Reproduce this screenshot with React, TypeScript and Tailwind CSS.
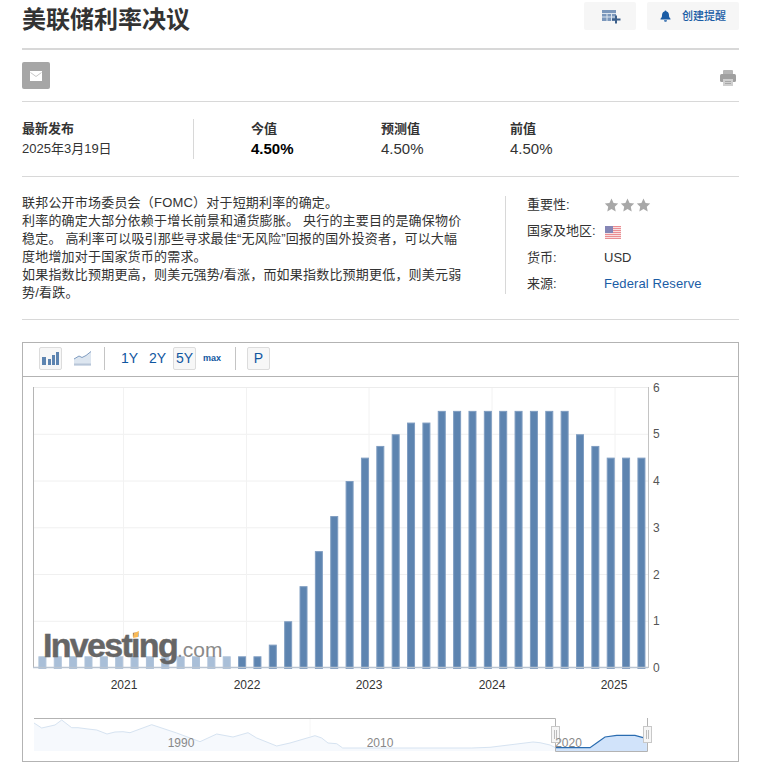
import React from "react";

const values = [
  0.25, 0.25, 0.25, 0.25, 0.25, 0.25, 0.25, 0.25, 0.25, 0.25, 0.25, 0.25, 0.25, 0.25, 0.25,
  0.5, 1, 1.75, 2.5, 3.25, 4, 4.5, 4.75, 5, 5.25, 5.25,
  5.5, 5.5, 5.5, 5.5, 5.5, 5.5, 5.5, 5.5, 5.5,
  5, 4.75, 4.5, 4.5, 4.5,
];

const navA =
  "34,723 41.7,728 55,725 61.7,720 71.7,727.7 78,727.7 88,729 96.7,730 107,734 115,732 123,731.7 130,732.7 151.7,724.7 176.7,733 200,741.7 216.7,734 233,737 248,732.7 256.7,738 276.7,746 290,743 315,735.7 321.7,738 328,743 336.7,743.7 342.7,748 471.7,748 490,747.3 533,742 540,742.7 550,745 555.5,747.7";
const navB = "555.5,747.7 590,747.7 598,742 605,737 616.7,735.3 635,735.3 646.7,738.7";

function Chart() {
  const y = (v: number) => 668 - v * 46.75;
  return (
    <svg viewBox="23 377 715 384" width={715} height={384} className="block">
      {[1, 2, 3, 4, 5].map((v) => (
        <line key={v} x1={33} x2={648} y1={y(v)} y2={y(v)} stroke="#f0f0f0" />
      ))}
      {[123.5, 246.5, 369, 492, 615].map((x) => (
        <line key={x} x1={x} x2={x} y1={387} y2={668} stroke="#f2f2f2" />
      ))}
      <line x1={33} x2={648} y1={387.5} y2={387.5} stroke="#ececec" />
      <line x1={33.5} x2={33.5} y1={387} y2={668} stroke="#b5b5b5" />
      <line x1={648.5} x2={648.5} y1={387} y2={668} stroke="#c4c4c4" />
      {values.map((v, i) => {
        const x = 38.4 + i * 15.36;
        return (
          <rect
            key={i}
            x={x + 0.5}
            y={y(v) + 0.5}
            width={7}
            height={668 - y(v)}
            fill={i < 13 ? "#a9bfd8" : "#5d84b0"}
            stroke={i < 13 ? "#afc3da" : "#7f9dc1"}
            strokeWidth={1}
          />
        );
      })}
      <line x1={33} x2={648} y1={667.5} y2={667.5} stroke="#b9c4d1" strokeWidth={1.4} />
      <text x={43} y={657} fontSize={34} fontWeight={700} letterSpacing={-1.7} fill="#666666" stroke="#666666" strokeWidth={0.5} fontFamily="'Liberation Sans', sans-serif">
        Investing
      </text>
      <polygon points="134,633 139,631 138,637 133,638" fill="#f9b955" />
      <text x={177} y={657} fontSize={21} fill="#8a8a8a" fontFamily="'Liberation Sans', sans-serif">
        .com
      </text>
      {[0, 1, 2, 3, 4, 5, 6].map((v) => (
        <text key={v} x={653} y={y(v) + 4} fontSize={12} fill="#555555">
          {v}
        </text>
      ))}
      {[
        ["2021", 124],
        ["2022", 247],
        ["2023", 369],
        ["2024", 492],
        ["2025", 614],
      ].map(([t, x]) => (
        <text key={t} x={x} y={689} fontSize={12} textAnchor="middle" fill="#333333">
          {t}
        </text>
      ))}
      <polygon points={`${navA} 555.5,751 34,751`} fill="#f6f9fd" />
      <polyline points={navA} fill="none" stroke="#d6e3f1" strokeWidth={1} />
      <polygon points={`${navB} 647,751 555.5,751`} fill="#d1e3fa" />
      <polyline points={navB} fill="none" stroke="#2a6cb0" strokeWidth={1.2} />
      <line x1={310} x2={310} y1={719} y2={736} stroke="#f6f6f6" />
      <polyline points="34,718.5 555.5,718.5 555.5,751.5 647.5,751.5 647.5,718" fill="none" stroke="#b3b3b3" />
      {[551, 643].map((x) => (
        <g key={x}>
          <rect x={x + 0.5} y={726.5} width={8} height={16} fill="#f6f6f6" stroke="#c8c8c8" />
          <line x1={x + 3.5} x2={x + 3.5} y1={730} y2={739} stroke="#bdbdbd" />
          <line x1={x + 5.5} x2={x + 5.5} y1={730} y2={739} stroke="#bdbdbd" />
        </g>
      ))}
      {[
        ["1990", 181],
        ["2010", 380],
        ["2020", 568.5],
      ].map(([t, x]) => (
        <text key={t} x={x} y={747} fontSize={12} textAnchor="middle" fill="#888888">
          {t}
        </text>
      ))}
    </svg>
  );
}

function Star() {
  return (
    <svg width={15} height={14} viewBox="0 0 24 23">
      <polygon points="12,1 15.4,8.2 23,9.1 17.4,14.4 18.9,22 12,18.2 5.1,22 6.6,14.4 1,9.1 8.6,8.2" fill="#a8a8a8" />
    </svg>
  );
}

function Flag() {
  return (
    <svg width={16} height={13} viewBox="0 0 16 13">
      <rect width={16} height={13} fill="#f9dfe0" />
      {[0, 2, 4, 6, 8, 10, 12].map((v) => (
        <rect key={v} y={v} width={16} height={1} fill="#ea8d92" />
      ))}
      <rect width={8} height={7} fill="#8586b5" />
    </svg>
  );
}

export default function App() {
  return (
    <div className="w-[758px] h-[764px] overflow-hidden bg-white pl-[22px] pr-[19px] text-[13px] text-[#333333] [font-family:'Liberation_Sans','Noto_Sans_CJK_SC',sans-serif]">
      {/* header */}
      <div className="flex h-[50px] items-start justify-between border-b-2 border-[#d8d8d8]">
        <h1 className="mt-[5px] text-[24px] leading-[30px] font-bold text-[#333333]">美联储利率决议</h1>
        <div className="mt-[2px] flex gap-[11px]">
          <button className="flex h-[28px] w-[52px] items-center justify-center rounded-[2px] bg-[#f6f6f6] pl-[3px]">
            <svg width={20} height={15} viewBox="0 0 20 15">
              <rect x={0} y={1} width={14} height={11} fill="#7b97bb" />
              <path d="M0 4.500h14M5 4.500v7.500M9.500 4.500v7.500M0 8h14" stroke="#dce5ef" strokeWidth={1} />
              <path d="M14 6.500v8M10 10.500h8.500" stroke="#3c5f8a" strokeWidth={2} />
            </svg>
          </button>
          <button className="flex h-[28px] w-[92px] items-center rounded-[2px] bg-[#f6f6f6] pl-[13px]">
            <svg width={11} height={12} viewBox="0 0 11 12">
              <path d="M5.500 0.500a1 1 0 0 1 1 1c2 .5 2.500 2.200 2.500 4 0 1.500.5 2.300 1.500 3.300v.7H.500v-.7c1-1 1.500-1.800 1.500-3.300 0-1.800.5-3.500 2.500-4a1 1 0 0 1 1-1zM4 10.300h3a1.500 1.500 0 0 1-3 0z" fill="#1a5ca5" />
            </svg>
            <span className="ml-[11px] text-[11px] font-medium text-[#1a5ca5]">创建提醒</span>
          </button>
        </div>
      </div>

      {/* share */}
      <div className="flex h-[52px] items-start justify-between border-b border-[#d8d8d8] pt-[12px]">
        <div className="flex h-[27px] w-[28px] items-center justify-center rounded-[2px] bg-[#a6a6a6]">
          <svg width={12} height={10} viewBox="0 0 12 10">
            <rect width={12} height={10} fill="#ffffff" />
            <path d="M0.500 1.500L6 5.500l5.500-4" fill="none" stroke="#c8c8c8" strokeWidth={1} />
          </svg>
        </div>
        <svg width={16} height={16} viewBox="0 0 16 16" className="mt-[8px] mr-[3px]">
          <rect x={3} y={0} width={10} height={5} rx={1} fill="#b5b5b5" />
          <rect x={0} y={4} width={16} height={8} rx={1.500} fill="#a0a0a0" />
          <rect x={3} y={9} width={10} height={7} fill="#cfcfcf" />
          <path d="M5 11.500h6M5 13.500h6" stroke="#a8a8a8" />
        </svg>
      </div>

      {/* stats */}
      <div className="flex h-[75px] items-start border-b border-[#d8d8d8] pt-[17px]">
        <div className="h-[40px] w-[172px] border-r border-[#d8d8d8]">
          <div className="mt-px h-[18px] font-bold leading-[18px]">最新发布</div>
          <div className="mt-[2px] leading-[18px]">2025年3月19日</div>
        </div>
        <div className="ml-[57px] w-[130px]">
          <div className="mt-px h-[18px] font-bold leading-[18px]">今值</div>
          <div className="mt-[2px] text-[15px] font-bold leading-[18px] text-black">4.50%</div>
        </div>
        <div className="w-[129px]">
          <div className="mt-px h-[18px] font-bold leading-[18px]">预测值</div>
          <div className="mt-[2px] text-[15px] leading-[18px]">4.50%</div>
        </div>
        <div>
          <div className="mt-px h-[18px] font-bold leading-[18px]">前值</div>
          <div className="mt-[2px] text-[15px] leading-[18px]">4.50%</div>
        </div>
      </div>

      {/* description */}
      <div className="flex h-[143px] items-start border-b border-[#d8d8d8] pt-[16px]">
        <p className="w-[445px] pt-[0.5px] tracking-[0.2px] leading-[18px]">
          联邦公开市场委员会（FOMC）对于短期利率的确定。
          <br />
          利率的确定大部分依赖于增长前景和通货膨胀。 央行的主要目的是确保物价稳定。 高利率可以吸引那些寻求最佳“无风险”回报的国外投资者，可以大幅度地增加对于国家货币的需求。
          <br />
          如果指数比预期更高，则美元强势/看涨，而如果指数比预期更低，则美元弱势/看跌。
        </p>
        <div className="ml-[38px] mt-[3px] h-[98px] border-l border-[#d8d8d8] pl-[21px]">
          <div className="flex h-[26px] items-start leading-[18px]">
            <span className="w-[77px]">重要性:</span>
            <span className="mt-[2px] flex gap-px">
              <Star />
              <Star />
              <Star />
            </span>
          </div>
          <div className="flex h-[27px] items-start leading-[18px]">
            <span className="w-[77px]">国家及地区:</span>
            <span className="ml-px mt-[4px]">
              <Flag />
            </span>
          </div>
          <div className="flex h-[26px] items-start leading-[18px]">
            <span className="w-[77px]">货币:</span>
            <span>USD</span>
          </div>
          <div className="flex h-[19px] items-start leading-[18px]">
            <span className="w-[77px]">来源:</span>
            <a className="tracking-[0.1px] text-[#1a5ca5]">Federal Reserve</a>
          </div>
        </div>
      </div>

      {/* chart */}
      <div className="mt-[22px] h-[420px] w-[717px] border border-[#b3b3b3]">
        <div className="flex h-[34px] items-start border-b border-[#b3b3b3] pl-[16px] pt-[4px] text-[#0f56a0]">
          <div className="flex h-[23px] w-[23px] items-center justify-center rounded-[2px] border border-[#dcdcdc] bg-[#f7f7f7]">
            <svg width={17} height={13} viewBox="0 0 17 13">
              <rect x={0} y={5} width={4} height={8} fill="#5d84b0" />
              <rect x={6} y={7} width={3} height={6} fill="#5d84b0" />
              <rect x={10} y={3} width={3} height={10} fill="#5d84b0" />
              <rect x={14} y={0} width={3} height={13} fill="#5d84b0" />
            </svg>
          </div>
          <svg width={17} height={15} viewBox="0 0 17 15" className="ml-[12px] mt-[4px]">
            <path d="M0 8l5-3 3 1.500 4-2 5-4v14H0z" fill="#dde6f0" />
            <path d="M0 8l5-3 3 1.500 4-2 5-4" fill="none" stroke="#7f9cc0" strokeWidth={1} />
            <path d="M0 13.500h17" stroke="#b8c6d8" strokeWidth={2} />
          </svg>
          <div className="ml-[13px] h-[23px] w-px bg-[#c4c4c4]" />
          <span className="ml-[16px] w-[17px] text-center text-[14px] leading-[23px]">1Y</span>
          <span className="ml-[11px] w-[17px] text-center text-[14px] leading-[23px]">2Y</span>
          <span className="ml-[7px] h-[23px] w-[23px] rounded-[2px] border border-[#dcdcdc] bg-[#f7f7f7] text-center text-[14px] leading-[21px]">5Y</span>
          <span className="ml-[7px] w-[18px] text-center text-[9px] font-bold leading-[23px]">max</span>
          <div className="ml-[14px] h-[23px] w-px bg-[#c4c4c4]" />
          <span className="ml-[11px] h-[23px] w-[23px] rounded-[2px] border border-[#dcdcdc] bg-[#f7f7f7] text-center text-[14px] leading-[21px]">P</span>
        </div>
        <Chart />
      </div>
    </div>
  );
}
